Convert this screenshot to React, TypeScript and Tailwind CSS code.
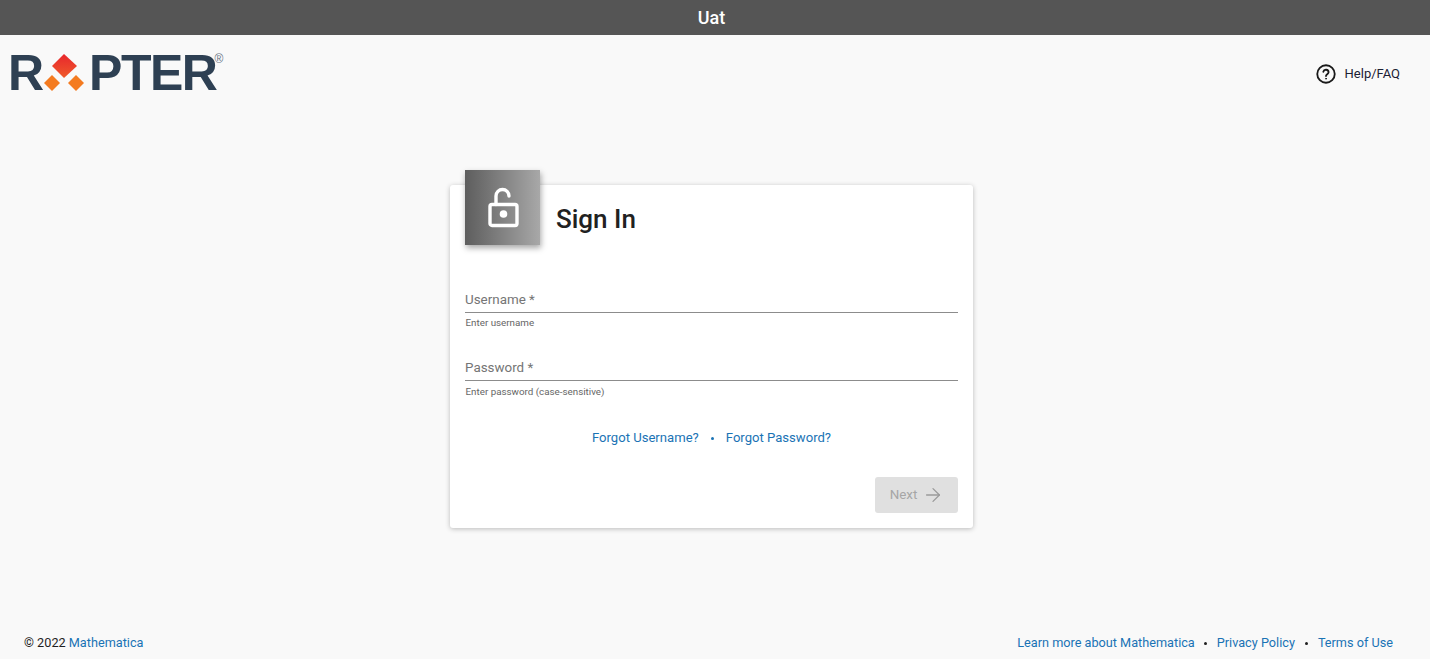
import React from 'react';
import { ArrowRight } from 'lucide-react';

function LogoMark() {
  return (
    <svg width="46" height="40" viewBox="0 0 46 40" className="shrink-0">
      <defs>
        <linearGradient id="topDiamond" x1="0" y1="0" x2="0" y2="1">
          <stop offset="0" stopColor="#e8262d" />
          <stop offset="1" stopColor="#ef5a2a" />
        </linearGradient>
      </defs>
      <polygon points="23,0 36,12 23,24 11,12" fill="url(#topDiamond)" />
      <polygon points="11,21 19,29 11,37 3,29" fill="#f47b20" />
      <polygon points="35,21 43,29 35,37 27,29" fill="#f47b20" />
    </svg>
  );
}

function Logo() {
  return (
    <div className="flex items-start text-[#2e4053] font-['Liberation_Sans',sans-serif] font-bold">
      <span className="text-[50px] leading-[37px] h-[37px] -ml-[3px]">R</span>
      <span className="-ml-[3px] -mt-[1px]">
        <LogoMark />
      </span>
      <span className="text-[50px] leading-[37px] h-[37px] ml-[2px] tracking-[-1.5px]">PTER</span>
      <span className="text-[12px] leading-[12px] -mt-[2px] -ml-[2px] font-normal text-[#6b7785]">®</span>
    </div>
  );
}

function Field({ label, hint, pass }: { label: string; hint: string; pass?: boolean }) {
  return (
    <div className={pass ? 'mt-[25px]' : ''}>
      <div className="h-[27px] pt-[3px] border-b border-[#8c8c8c] text-[13.4px] leading-[22px] text-[#757575]">
        {label}
      </div>
      <div className={`${pass ? 'mt-[5px]' : 'mt-[4px]'} pl-[0.5px] text-[9.8px] leading-[12px] text-[#666666]`}>{hint}</div>
    </div>
  );
}

export default function App() {
  return (
    <div className="h-[659px] flex flex-col bg-[#f9f9f9] font-['Roboto',sans-serif] overflow-hidden">
      <div className="h-[35px] shrink-0 bg-[#555555] flex items-center justify-center pr-[7px] text-white text-[18px] font-medium">
        Uat
      </div>

      <div className="flex items-start justify-between pl-[11px] pr-[30px] pt-[20px] h-[135px] shrink-0">
        <Logo />
        <div className="flex items-center gap-[9px] mt-[9px] text-[13px] text-[#1c2033]">
          <svg width="20" height="20" viewBox="0 0 24 24" fill="none" stroke="#1a1a1a" strokeWidth="2.2" strokeLinecap="round">
            <circle cx="12" cy="12" r="10.5" />
            <path d="M8.8 9.3a3.2 3.2 0 0 1 6.3.7c0 2.1-3.1 2.5-3.1 4.4" />
            <circle cx="12" cy="17.6" r="0.6" fill="#1a1a1a" strokeWidth="1" />
          </svg>
          <span>Help/FAQ</span>
        </div>
      </div>

      <div className="flex justify-center pr-[7px]">
        <div className="w-[523px] h-[343px] mt-[15px] bg-white rounded-[3px] shadow-[0_1px_5px_rgba(0,0,0,0.25)] px-[15px]">
          <div className="flex items-start h-[60px]">
            <div className="relative -mt-[15px] w-[75px] h-[75px] shrink-0 flex items-center justify-center bg-gradient-to-r from-[#5e5e5e] to-[#a8a8a8] shadow-[1px_3px_6px_rgba(0,0,0,0.35)]">
              <svg width="34" height="42" viewBox="0 0 34 42" fill="none" stroke="white" strokeWidth="3.4" strokeLinecap="round">
                <rect x="4" y="17.5" width="27" height="21" rx="2" />
                <path d="M10 17.5V9a6.5 6.5 0 0 1 13 0" />
                <circle cx="17.5" cy="27" r="3.8" fill="white" stroke="none" />
              </svg>
            </div>
            <h1 className="ml-[16px] mt-[17px] text-[26px] leading-[34px] font-medium text-[#212121]">Sign In</h1>
          </div>

          <div className="pt-[41px]">
            <Field label="Username *" hint="Enter username" />
            <Field label="Password *" hint="Enter password (case-sensitive)" pass />
          </div>

          <div className="mt-[31px] flex items-center justify-center text-[13.1px] leading-[18px] text-[#1a73b5]">
            <span>Forgot Username?</span>
            <span className="w-[27px] flex justify-center">
              <span className="w-[3px] h-[3px] rounded-full bg-[#1a73b5]" />
            </span>
            <span>Forgot Password?</span>
          </div>

          <div className="mt-[30px] flex justify-end">
            <div className="w-[83px] h-[36px] rounded-[3px] bg-[#e0e0e0] flex items-center justify-center gap-[5px] pl-[1px] text-[13.4px] text-[#a6a6a6]">
              <span>Next</span>
              <ArrowRight size={22} strokeWidth={1.4} color="#9a9a9a" />
            </div>
          </div>
        </div>
      </div>

      <div className="mt-auto pb-[7px] pl-[24px] pr-[37px] flex justify-between items-center text-[12.7px] leading-[18px] text-[#1f1f1f]">
        <div>
          © 2022 <span className="text-[#1a73b5]">Mathematica</span>
        </div>
        <div className="flex items-center text-[#1a73b5]">
          <span>Learn more about Mathematica</span>
          <span className="w-[22px] flex justify-center">
            <span className="w-[3px] h-[3px] rounded-full bg-[#1f1f1f]" />
          </span>
          <span>Privacy Policy</span>
          <span className="w-[23px] flex justify-center">
            <span className="w-[3px] h-[3px] rounded-full bg-[#1f1f1f]" />
          </span>
          <span>Terms of Use</span>
        </div>
      </div>
    </div>
  );
}
